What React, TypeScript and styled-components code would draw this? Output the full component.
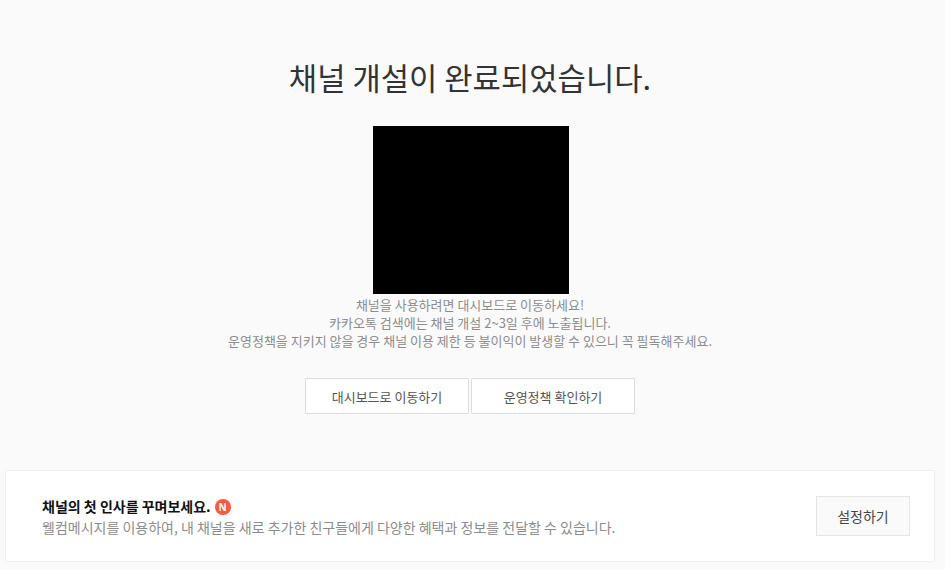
import React from 'react';
import styled, { createGlobalStyle } from 'styled-components';

const GlobalStyle = createGlobalStyle`
  html, body {
    margin: 0;
    padding: 0;
    background: #fafafa;
    font-family: "Noto Sans CJK KR", "Noto Sans", sans-serif;
  }
`;

const Page = styled.div`
  width: 940px;
  height: 570px;
  padding: 0 5px;
  box-sizing: border-box;
  display: flex;
  flex-direction: column;
  align-items: center;
  overflow: hidden;
`;

const Title = styled.h1`
  margin: 56px 0 0;
  font-size: 30.8px;
  line-height: 42px;
  font-weight: 400;
  color: #333;
`;

const Thumbnail = styled.div`
  width: 196px;
  height: 168px;
  margin: 28px 0 0 2px;
  background: #000;
`;

const Notice = styled.p`
  margin: 2px 0 0;
  font-size: 13px;
  line-height: 18px;
  color: #8c8c8c;
  text-align: center;
`;

const ButtonRow = styled.div`
  display: flex;
  gap: 2px;
  margin-top: 28px;
`;

const OutlineButton = styled.button`
  width: 164px;
  height: 36px;
  padding: 0;
  box-sizing: border-box;
  background: #fff;
  border: 1px solid #ddd;
  border-radius: 1px;
  font-family: inherit;
  font-size: 13px;
  color: #555;
`;

const PromoCard = styled.section`
  width: 100%;
  height: 92px;
  margin-top: 56px;
  padding: 0 24px 0 36px;
  box-sizing: border-box;
  display: flex;
  align-items: center;
  justify-content: space-between;
  background: #fff;
  border: 1px solid #efefef;
  border-radius: 2px;
`;

const PromoHeading = styled.div`
  display: flex;
  align-items: center;
  gap: 4px;
  margin-top: 1px;
  font-size: 14px;
  line-height: 20px;
  font-weight: 700;
  color: #111;
`;

const NewBadge = styled.span`
  width: 16px;
  height: 16px;
  margin-top: 2px;
  border-radius: 50%;
  background: #fb5a40;
  color: #fff;
  font-family: "Noto Sans", sans-serif;
  font-size: 10px;
  line-height: 16px;
  font-weight: 700;
  text-align: center;
`;

const PromoText = styled.p`
  margin: 1px 0 0;
  font-size: 14px;
  line-height: 20px;
  color: #8c8c8c;
`;

const SettingsButton = styled.button`
  width: 94px;
  height: 40px;
  padding: 0;
  background: #fafafa;
  border: 1px solid #e5e5e5;
  font-family: inherit;
  font-size: 14px;
  color: #444;
`;

export default function App() {
  return (
    <>
      <GlobalStyle />
      <Page>
        <Title>채널 개설이 완료되었습니다.</Title>
        <Thumbnail />
        <Notice>
          채널을 사용하려면 대시보드로 이동하세요!
          <br />
          카카오톡 검색에는 채널 개설 2~3일 후에 노출됩니다.
          <br />
          운영정책을 지키지 않을 경우 채널 이용 제한 등 불이익이 발생할 수 있으니 꼭 필독해주세요.
        </Notice>
        <ButtonRow>
          <OutlineButton>대시보드로 이동하기</OutlineButton>
          <OutlineButton>운영정책 확인하기</OutlineButton>
        </ButtonRow>
        <PromoCard>
          <div>
            <PromoHeading>
              채널의 첫 인사를 꾸며보세요.
              <NewBadge>N</NewBadge>
            </PromoHeading>
            <PromoText>
              웰컴메시지를 이용하여, 내 채널을 새로 추가한 친구들에게 다양한 혜택과 정보를 전달할 수 있습니다.
            </PromoText>
          </div>
          <SettingsButton>설정하기</SettingsButton>
        </PromoCard>
      </Page>
    </>
  );
}
